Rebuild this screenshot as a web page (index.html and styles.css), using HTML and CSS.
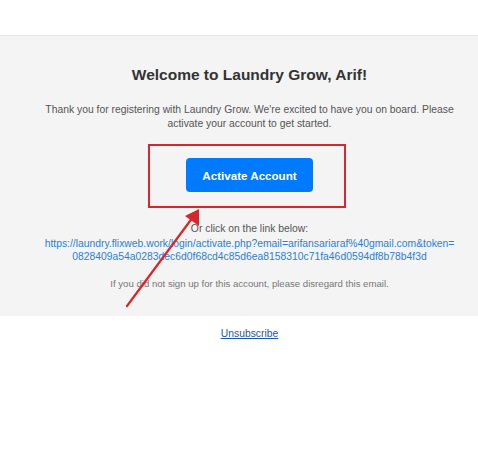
FILE: index.html
```html
<!DOCTYPE html>
<html>
<head>
<meta charset="utf-8">
<link rel="stylesheet" href="styles.css">
</head>
<body>
<div class="page">
  <div class="top-space"></div>
  <div class="panel">
    <h1 class="title">Welcome to Laundry Grow, Arif!</h1>
    <p class="intro">Thank you for registering with Laundry Grow. We're excited to have you on board. Please activate your account to get started.</p>
    <div class="cta">
      <a class="btn" href="#">Activate Account</a>
      <div class="highlight"></div>
    </div>
    <p class="alt">Or click on the link below:</p>
    <p class="link"><a href="#">https://laundry.flixweb.work/login/activate.php?email=arifansariaraf%40gmail.com&amp;token=<br>0828409a54a0283dec6d0f68cd4c85d6ea8158310c71fa46d0594df8b78b4f3d</a></p>
    <p class="note">If you did not sign up for this account, please disregard this email.</p>
  </div>
  <div class="footer"><a href="#">Unsubscribe</a></div>
  <svg class="arrow" width="478" height="458" viewBox="0 0 478 458">
    <line x1="127" y1="306" x2="193" y2="217" stroke="#d8262c" stroke-width="2.2" stroke-linecap="round"/>
    <polygon points="199,209 199,226 185,216" fill="#d8262c"/>
  </svg>
</div>
</body>
</html>
```

FILE: styles.css
```css
html, body {
  margin: 0;
  padding: 0;
  background: #ffffff;
}
.page {
  position: relative;
  width: 478px;
  height: 458px;
  font-family: "Liberation Sans", Arial, sans-serif;
  overflow: hidden;
}
.top-space {
  height: 35px;
}
.panel {
  background: #f4f4f4;
  border-top: 1px solid #e6e6e6;
  height: 281px;
  box-sizing: border-box;
  padding: 30px 0 0 21px;
  text-align: center;
}
.title {
  margin: 0;
  font-size: 15.5px;
  line-height: 18px;
  font-weight: bold;
  color: #333333;
}
.intro {
  margin: 19px auto 0;
  width: 420px;
  font-size: 10.35px;
  line-height: 14px;
  color: #555555;
}
.cta {
  position: relative;
  display: flex;
  justify-content: center;
  margin-top: 27px;
}
.btn {
  display: flex;
  align-items: center;
  justify-content: center;
  width: 127px;
  height: 34px;
  background: #007bff;
  color: #ffffff;
  font-size: 11.6px;
  font-weight: bold;
  text-decoration: none;
  border-radius: 4px;
}
.highlight {
  position: absolute;
  left: 127px;
  top: -14px;
  width: 198px;
  height: 64px;
  box-sizing: border-box;
  border: 2px solid #d8262c;
}
.alt {
  margin: 30px 0 0;
  font-size: 10.35px;
  line-height: 13px;
  color: #555555;
}
.link {
  margin: 2px 0 0;
  font-size: 10.35px;
  line-height: 13px;
}
.link a {
  color: #2a7fd4;
  text-decoration: none;
}
.note {
  margin: 14px 0 0;
  font-size: 9.6px;
  line-height: 13px;
  color: #777777;
}
.footer {
  text-align: center;
  padding: 11px 0 0 21px;
  font-size: 10.35px;
  line-height: 13px;
}
.footer a {
  color: #2357a6;
  text-decoration: underline;
}
.arrow {
  position: absolute;
  left: 0;
  top: 0;
  pointer-events: none;
}
```
